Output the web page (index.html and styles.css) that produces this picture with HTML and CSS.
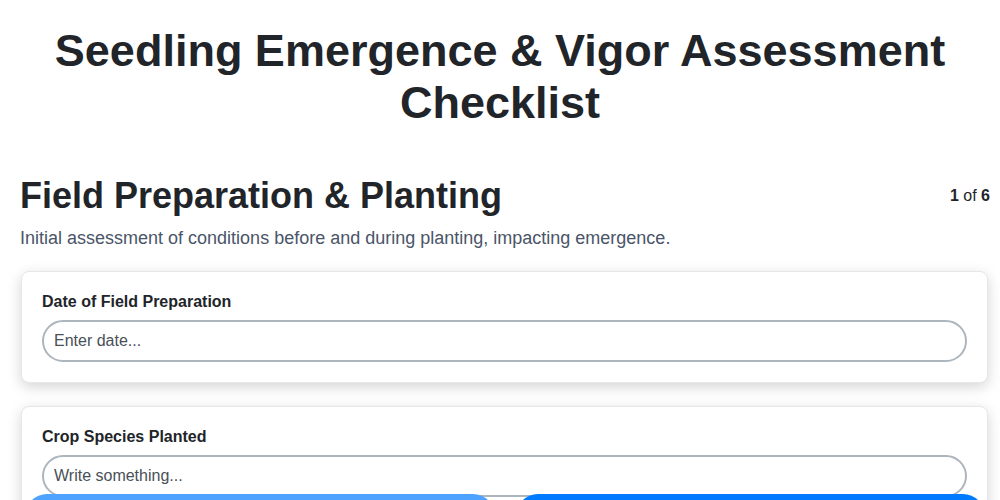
FILE: index.html
```html
<!DOCTYPE html>
<html lang="en">
<head>
  <meta charset="UTF-8">
  <meta name="viewport" content="width=device-width, initial-scale=1.0">
  <title>Seedling Emergence &amp; Vigor Assessment Checklist</title>
  <link rel="stylesheet" href="styles.css">
</head>
<body>

  <!-- Titulo -->
  <h1 class="titulo">Seedling Emergence &amp; Vigor Assessment Checklist</h1>

  <!-- Secao atual -->
  <div class="secao">
    <div class="secao-topo">
      <h2>Field Preparation &amp; Planting</h2>
      <span class="contador"><b>1</b> of <b>6</b></span>
    </div>
    <p class="secao-desc">Initial assessment of conditions before and during planting, impacting emergence.</p>

    <div class="cartao">
      <label for="dataPreparo">Date of Field Preparation</label>
      <input type="text" id="dataPreparo" placeholder="Enter date...">
    </div>

    <div class="cartao">
      <label for="especie">Crop Species Planted</label>
      <input type="text" id="especie" placeholder="Write something...">
    </div>
  </div>

  <!-- Navegacao -->
  <div class="navegacao">
    <button class="btn-voltar">Previous</button>
    <button class="btn-proximo">Next</button>
  </div>

</body>
</html>
```

FILE: styles.css
```css
/* Estilos gerais */
body {
  margin: 0;
  padding: 0;
  font-family: "Liberation Sans", Arial, sans-serif;
  background: #fff;
  color: #212529;
}

.titulo {
  margin: 0;
  padding: 25px 40px 0;
  font-size: 45px;
  line-height: 52px;
  text-align: center;
  color: #212529;
}

.secao {
  padding: 45px 12px 0 20px;
}

.secao-topo {
  display: flex;
  justify-content: space-between;
  align-items: center;
}

.secao-topo h2 {
  margin: 0;
  font-size: 36px;
  line-height: 44px;
}

.contador {
  font-size: 16px;
  margin-right: -2px;
}

.secao-desc {
  margin: 9px 0 22px;
  font-size: 18px;
  line-height: 22px;
  color: #4a5568;
}

/* Cartoes das perguntas */
.cartao {
  background: #fff;
  border: 1px solid #e5e7eb;
  border-radius: 8px;
  box-shadow: 0 4px 14px rgba(0,0,0,0.17);
  padding: 20px;
  margin: 0 0 23px 1px;
}

.cartao label {
  display: block;
  font-weight: bold;
  font-size: 16px;
  line-height: 19px;
  margin-bottom: 9px;
}

.cartao input {
  width: 100%;
  box-sizing: border-box;
  padding: 10px;
  border: 2px solid #adb5bd;
  border-radius: 22px;
  font-family: inherit;
  font-size: 16px;
  line-height: 18px;
  color: #212529;
}

.cartao input::placeholder {
  color: #495057;
}

/* Barra de navegacao fixa */
.navegacao {
  position: fixed;
  left: 0;
  right: 0;
  bottom: -38px;
  display: flex;
  gap: 21px;
  padding: 0 15px 0 25px;
}

.navegacao button {
  flex: 1;
  height: 44px;
  border: none;
  border-radius: 22px;
  color: #fff;
  font-size: 16px;
  font-family: inherit;
  cursor: pointer;
}

.btn-voltar {
  background: #4da3ff;
}

.btn-proximo {
  background: #007bff;
}
```
